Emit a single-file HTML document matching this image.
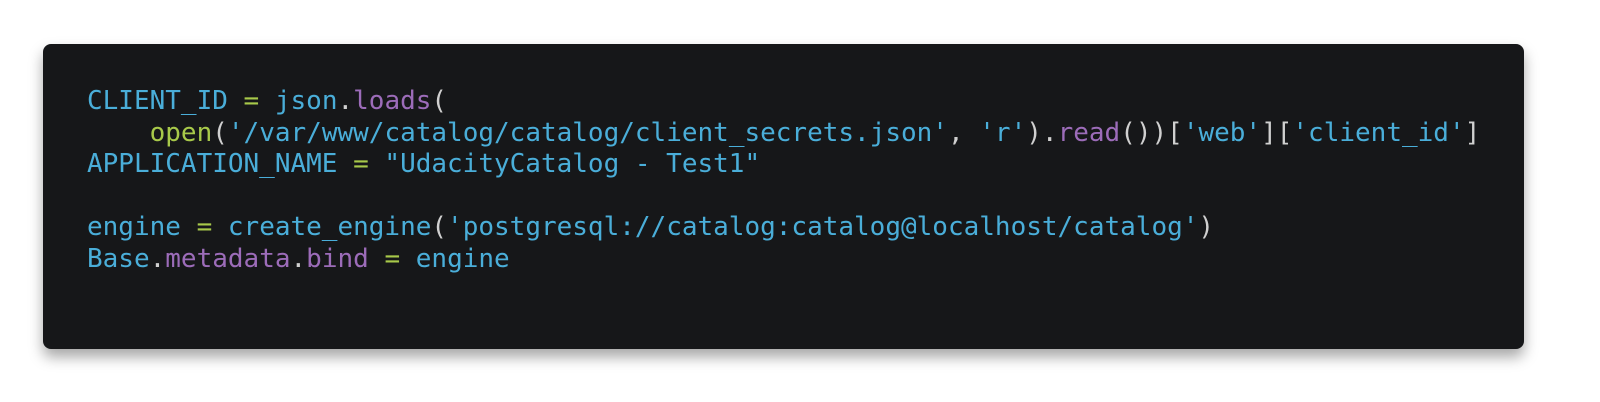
<!DOCTYPE html>
<html><head><style>
html,body{margin:0;padding:0;background:#fff;width:1600px;height:402px;overflow:hidden}
.box{position:absolute;left:43px;top:44px;width:1481px;height:305px;background:#161719;border-radius:8px;box-shadow:0 8px 14px rgba(0,0,0,0.35)}
pre{position:absolute;left:87px;top:86px;margin:0;font-family:"DejaVu Sans Mono","Liberation Mono",monospace;font-size:26px;line-height:31.6px;color:#4aaed9;white-space:pre}
.g{color:#a8c94a}.p{color:#9c6cb9}.w{color:#d0d0d0}
</style></head><body>
<div class="box"></div>
<pre>CLIENT_ID <span class="g">=</span> json<span class="w">.</span><span class="p">loads</span><span class="w">(</span>
    <span class="g">open</span><span class="w">(</span>'/var/www/catalog/catalog/client_secrets.json'<span class="w">, </span>'r'<span class="w">).</span><span class="p">read</span><span class="w">())[</span>'web'<span class="w">][</span>'client_id'<span class="w">]</span>
APPLICATION_NAME <span class="g">=</span> "UdacityCatalog - Test1"

engine <span class="g">=</span> create_engine<span class="w">(</span>'postgresql://catalog:catalog@localhost/catalog'<span class="w">)</span>
Base<span class="w">.</span><span class="p">metadata</span><span class="w">.</span><span class="p">bind</span> <span class="g">=</span> engine</pre>
</body></html>
